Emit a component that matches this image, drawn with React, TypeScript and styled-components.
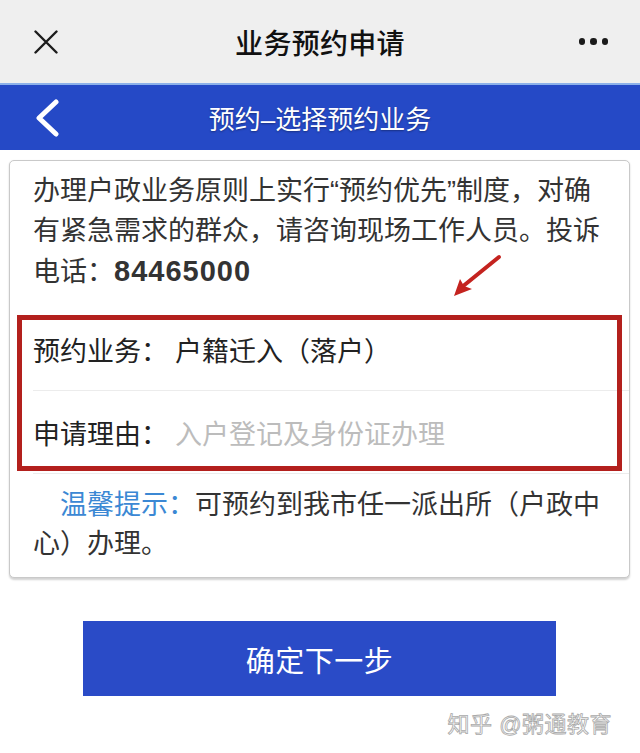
import React from "react";
import styled, { createGlobalStyle } from "styled-components";

const GlobalStyle = createGlobalStyle`
  html, body { margin: 0; padding: 0; background: #ffffff; }
  body {
    font-family: "Liberation Sans", "Noto Sans CJK SC", sans-serif;
    color: #333333;
  }
  * { box-sizing: border-box; }
`;

const Page = styled.div`
  position: relative;
  width: 640px;
  height: 753px;
  overflow: hidden;
  background: #ffffff;
`;

const TopBar = styled.header`
  height: 83px;
  background: #efefef;
  display: grid;
  grid-template-columns: 90px 1fr 90px;
  align-items: center;
`;

const TopTitle = styled.h1`
  margin: 0;
  text-align: center;
  font-size: 28px;
  font-weight: 500;
  color: #111111;
  letter-spacing: 0.3px;
`;

const IconCell = styled.div<{ $align: "start" | "end" }>`
  display: flex;
  justify-content: ${(p) => (p.$align === "start" ? "flex-start" : "flex-end")};
  padding: ${(p) => (p.$align === "start" ? "0 0 0 34px" : "0 32px 0 0")};
  align-items: center;
`;

const Dots = styled.div`
  display: flex;
  gap: 5px;
`;

const Dot = styled.span`
  width: 6.5px;
  height: 6.5px;
  border-radius: 50%;
  background: #1a1a1a;
`;

const NavBar = styled.nav`
  height: 67px;
  background: #2549c6;
  border-top: 2px solid #8db1ea;
  display: grid;
  grid-template-columns: 90px 1fr 90px;
  align-items: center;
`;

const NavTitle = styled.h2`
  margin: 0;
  text-align: center;
  font-size: 26px;
  font-weight: 400;
  color: #ffffff;
  text-shadow: 0 1px 2px rgba(0, 0, 0, 0.35);
`;

const Card = styled.section`
  position: relative;
  margin: 10px 10px 0 9px;
  border: 1px solid #c9c9c9;
  border-radius: 5px;
  box-shadow: 0 1.5px 2px rgba(0, 0, 0, 0.18);
  background: #ffffff;
  padding: 10px 0 13px;
`;

const Intro = styled.p`
  margin: 0;
  padding: 0 20px 0 23px;
  font-size: 27px;
  line-height: 40px;
  color: #333333;
  white-space: nowrap;
`;

const Phone = styled.b`
  font-weight: 700;
  font-size: 29px;
  letter-spacing: 1px;
`;

const FormList = styled.div`
  margin-top: 16px;
  margin-left: 23px;
`;

const FormRow = styled.div`
  height: 83px;
  display: flex;
  align-items: center;
  border-bottom: 1px solid #ececec;
  font-size: 27px;
`;

const Label = styled.span`
  color: #222222;
`;

const Value = styled.span<{ $placeholder?: boolean }>`
  margin-left: 7px;
  color: ${(p) => (p.$placeholder ? "#bcbcbc" : "#222222")};
`;

const Hint = styled.p`
  margin: 12px 0 0;
  padding: 0 20px 0 23px;
  font-size: 27px;
  line-height: 39px;
  text-indent: 27px;
  color: #333333;
  white-space: nowrap;
`;

const HintLabel = styled.span`
  color: #3b88d4;
`;

const Highlight = styled.div`
  position: absolute;
  left: 7px;
  top: 154px;
  width: 605px;
  height: 156px;
  border: 5px solid #b3201d;
  pointer-events: none;
`;

const Arrow = styled.svg`
  position: absolute;
  left: 430px;
  top: 92px;
`;

const ButtonWrap = styled.div`
  display: flex;
  justify-content: center;
  margin-top: 43px;
  padding-right: 1px;
`;

const NextButton = styled.button`
  width: 473px;
  height: 75px;
  border: none;
  border-radius: 0;
  background: #2a4bc7;
  color: #ffffff;
  font-family: "Liberation Sans", "Noto Sans CJK SC", sans-serif;
  font-size: 29px;
  font-weight: 400;
  letter-spacing: 0.5px;
  padding: 0;
`;

const Watermark = styled.div`
  position: absolute;
  right: 28px;
  bottom: 15px;
  font-size: 22px;
  color: #ffffff;
  -webkit-text-stroke: 0.8px #a9a9a9;
  letter-spacing: 0.5px;
`;

export default function App() {
  return (
    <>
      <GlobalStyle />
      <Page>
        <TopBar>
          <IconCell $align="start">
            <svg width="24" height="24" viewBox="0 0 24 24">
              <path d="M1.5 1.5 L22.5 22.5 M22.5 1.5 L1.5 22.5" stroke="#1c1c1c" strokeWidth="2.4" strokeLinecap="round" fill="none" />
            </svg>
          </IconCell>
          <TopTitle>业务预约申请</TopTitle>
          <IconCell $align="end">
            <Dots>
              <Dot />
              <Dot />
              <Dot />
            </Dots>
          </IconCell>
        </TopBar>
        <NavBar>
          <IconCell $align="start">
            <svg width="26" height="38" viewBox="0 0 26 38">
              <path d="M22 3 L5 19 L22 35" stroke="#ffffff" strokeWidth="5" strokeLinecap="round" strokeLinejoin="round" fill="none" />
            </svg>
          </IconCell>
          <NavTitle>预约–选择预约业务</NavTitle>
          <div />
        </NavBar>
        <Card>
          <Intro>
            办理户政业务原则上实行“预约优先”制度，对确
            <br />
            有紧急需求的群众，请咨询现场工作人员。投诉
            <br />
            电话：<Phone>84465000</Phone>
          </Intro>
          <FormList>
            <FormRow>
              <Label>预约业务：</Label>
              <Value>户籍迁入（落户）</Value>
            </FormRow>
            <FormRow>
              <Label>申请理由：</Label>
              <Value $placeholder>入户登记及身份证办理</Value>
            </FormRow>
          </FormList>
          <Hint>
            <HintLabel>温馨提示：</HintLabel>可预约到我市任一派出所（户政中
            <br />
            心）办理。
          </Hint>
          <Highlight />
          <Arrow width="66" height="50" viewBox="0 0 66 50">
            <path d="M59 4 L22 34" stroke="#c4231f" strokeWidth="4" strokeLinecap="round" fill="none" />
            <path d="M14 43 L20 26 L24 33 L32 36 Z" fill="#c4231f" />
          </Arrow>
        </Card>
        <ButtonWrap>
          <NextButton>确定下一步</NextButton>
        </ButtonWrap>
        <Watermark>知乎 @粥通教育</Watermark>
      </Page>
    </>
  );
}
